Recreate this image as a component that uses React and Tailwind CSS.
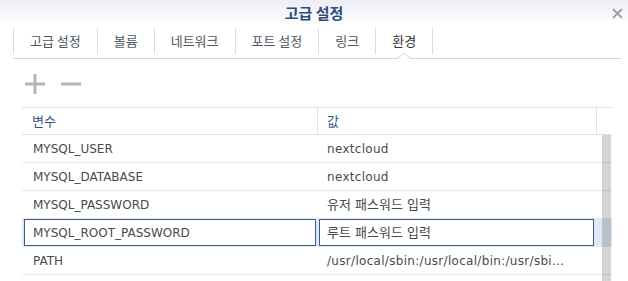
import React from "react";

const tabs = ["고급 설정", "볼륨", "네트워크", "포트 설정", "링크", "환경"];

const rows = [
  { name: "MYSQL_USER", value: "nextcloud" },
  { name: "MYSQL_DATABASE", value: "nextcloud" },
  { name: "MYSQL_PASSWORD", value: "유저 패스워드 입력", ko: true },
  { name: "MYSQL_ROOT_PASSWORD", value: "루트 패스워드 입력", ko: true, editing: true },
  { name: "PATH", value: "/usr/local/sbin:/usr/local/bin:/usr/sbi..." },
];

function App() {
  return (
    <div className="w-[628px] h-[281px] overflow-hidden bg-white text-[12px] font-['DejaVu_Sans','Noto_Sans_CJK_KR',sans-serif]">
      {/* title bar */}
      <div className="h-[26px] grid grid-cols-[1fr_auto_1fr] items-center bg-gradient-to-b from-[#ebeef4] to-white">
        <div />
        <span className="text-[15px] font-bold text-[#2e4b7c] font-['Noto_Sans_CJK_KR',sans-serif]">
          고급 설정
        </span>
        <div className="flex justify-end pr-[5px]">
          <svg width="11" height="11" viewBox="0 0 11 11">
            <path d="M1 1 L10 10 M10 1 L1 10" stroke="#9c9ea2" strokeWidth="1.8" />
          </svg>
        </div>
      </div>

      {/* tabs */}
      <div className="mt-[2px] ml-[13px] w-[608px] pb-[4px] border-b border-[#d3d6db] flex">
        {tabs.map((t, i) => (
          <div
            key={t}
            className={`relative h-[26px] px-[16px] flex items-center border-l border-[#d9dee6] text-[13px] font-['Noto_Sans_CJK_KR',sans-serif] ${
              i === tabs.length - 1 ? "border-r text-[#333]" : "text-[#4f5661]"
            }`}
          >
            {t}
            {i === tabs.length - 1 && (
              <svg
                className="absolute left-1/2 -translate-x-1/2 bottom-[-5px]"
                width="14"
                height="6"
                viewBox="0 0 14 6"
              >
                <polygon points="0,6 7,0.5 14,6" fill="white" />
                <polyline points="0,5.5 7,0.5 14,5.5" fill="none" stroke="#d3d6db" strokeWidth="1" />
              </svg>
            )}
          </div>
        ))}
      </div>

      {/* toolbar */}
      <div className="mt-[15px] pl-[25px] h-[20px] flex items-center gap-[16px]">
        <svg width="20" height="20" viewBox="0 0 20 20">
          <path d="M10 0 V20 M0 10 H20" stroke="#b3b5b8" strokeWidth="3" />
        </svg>
        <svg width="20" height="20" viewBox="0 0 20 20">
          <path d="M0 10 H20" stroke="#b3b5b8" strokeWidth="3" />
        </svg>
      </div>

      {/* table */}
      <div className="mt-[13px] ml-[22px] w-[590px]">
        <div className="h-[28px] grid grid-cols-[296px_279px_15px] border-t border-b border-[#dde2ec] text-[13px] text-[#36558a] font-['Noto_Sans_CJK_KR',sans-serif]">
          <div className="border-r border-[#dde2ec] pl-[10px] flex items-center">변수</div>
          <div className="border-r border-[#dde2ec] pl-[9px] flex items-center">값</div>
          <div />
        </div>

        <div className="relative h-[146px]">
          {rows.map((r) =>
            r.editing ? (
              <div
                key={r.name}
                className="h-[28px] grid grid-cols-[296px_279px_15px] border-b border-[#e6e9ef] bg-[#dfe8f7] text-[#4a4a4a]"
              >
                <div className="pl-[2px] flex">
                  <div className="w-[292px] h-[27px] border border-[#3b5a8e] bg-white pl-[8px] flex items-center">
                    {r.name}
                  </div>
                </div>
                <div className="pl-[1px] flex">
                  <div className="w-[275px] h-[27px] border border-[#3b5a8e] bg-white pl-[7px] flex items-center text-[13px]">
                    {r.value}
                  </div>
                </div>
                <div />
              </div>
            ) : (
              <div
                key={r.name}
                className="h-[28px] grid grid-cols-[296px_279px_15px] border-b border-[#e6e9ef] text-[#4a4a4a]"
              >
                <div className="pl-[11px] flex items-center">{r.name}</div>
                <div
                  className={`pl-[9px] flex items-center whitespace-nowrap ${
                    r.ko ? "text-[13px]" : "tracking-[0.3px]"
                  }`}
                >
                  {r.value}
                </div>
                <div />
              </div>
            )
          )}
          {/* scrollbar */}
          <div className="absolute right-[1px] top-0 w-[9px] h-full bg-black/[0.17]" />
        </div>
      </div>
    </div>
  );
}

export default App;
